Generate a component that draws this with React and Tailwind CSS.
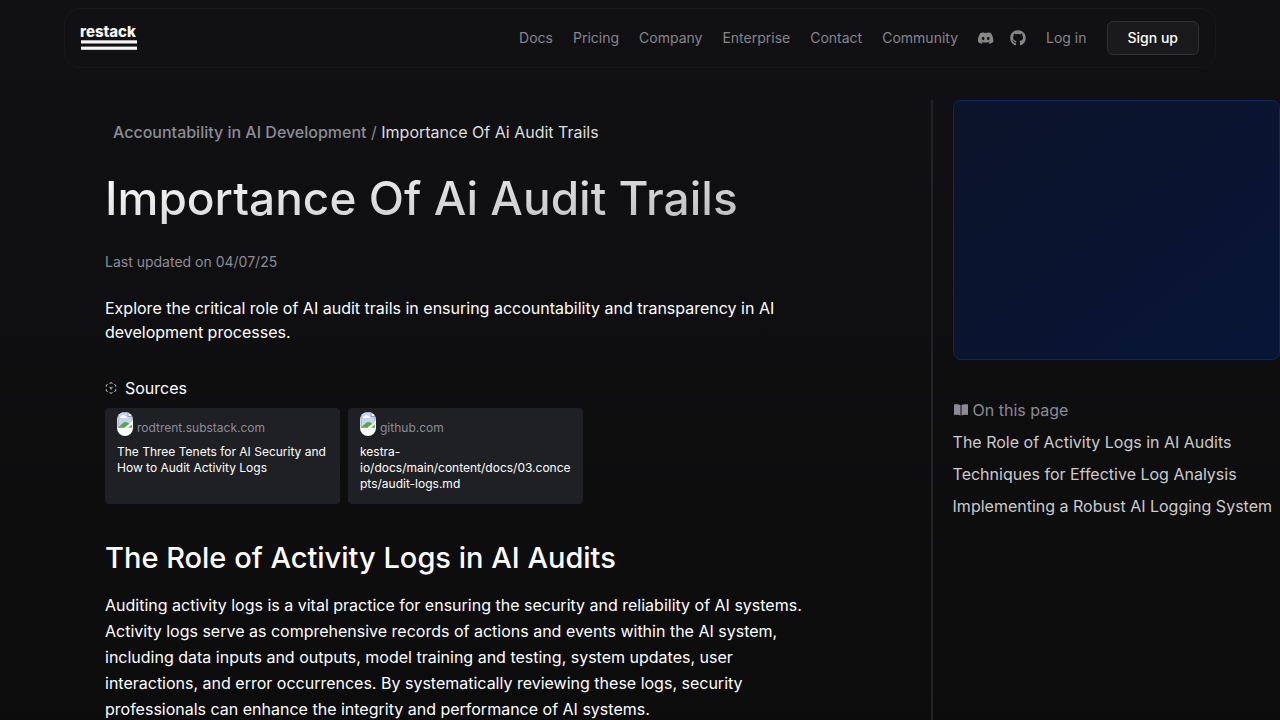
import { useId } from 'react';
import { FaGithub } from 'react-icons/fa';

const navLinks = ['Docs', 'Pricing', 'Company', 'Enterprise', 'Contact', 'Community'];

const sources = [
  {
    domain: 'rodtrent.substack.com',
    title: 'The Three Tenets for AI Security and How to Audit Activity Logs',
  },
  {
    domain: 'github.com',
    title: 'kestra-io/docs/main/content/docs/03.concepts/audit-logs.md',
  },
];

const sections = [
  'The Role of Activity Logs in AI Audits',
  'Techniques for Effective Log Analysis',
  'Implementing a Robust AI Logging System',
];

function Logo() {
  return (
    <a href="#" aria-label="restack home" className="block w-14 text-[#f5f5f5]">
      <svg viewBox="0 0 56 26" className="h-[26px] w-14 overflow-visible" fill="currentColor">
        <text x="-1" y="12" fontFamily="Inter" fontSize="15" fontWeight="800">restack</text>
        <rect x="0" y="15.300" width="56" height="3.200" />
        <rect x="0" y="21.600" width="56" height="3.200" />
      </svg>
    </a>
  );
}

function DiscordIcon() {
  return (
    <svg viewBox="0 0 25 24" className="h-4 w-4" fill="currentColor" aria-hidden="true">
      <path d="M20.317 4.37a19.8 19.8 0 0 0-4.885-1.515.07.07 0 0 0-.079.037c-.21.375-.444.864-.608 1.25a18.3 18.3 0 0 0-5.487 0 12.6 12.6 0 0 0-.617-1.25.08.08 0 0 0-.079-.037A19.7 19.7 0 0 0 3.677 4.37C.533 9.046-.32 13.58.099 18.057a.08.08 0 0 0 .031.057 19.9 19.9 0 0 0 5.993 3.03.08.08 0 0 0 .084-.028c.462-.63.874-1.295 1.226-1.994a.076.076 0 0 0-.041-.106 13 13 0 0 1-1.872-.892.077.077 0 0 1-.008-.128q.19-.14.372-.292a.07.07 0 0 1 .077-.01c3.928 1.793 8.18 1.793 12.062 0a.07.07 0 0 1 .078.01q.18.15.373.292a.077.077 0 0 1-.006.127 12.3 12.3 0 0 1-1.873.892.077.077 0 0 0-.041.107c.36.698.772 1.362 1.225 1.993a.08.08 0 0 0 .084.028 19.8 19.8 0 0 0 6.002-3.03.08.08 0 0 0 .032-.054c.5-5.177-.838-9.674-3.549-13.66a.06.06 0 0 0-.031-.03zM8.02 15.33c-1.183 0-2.157-1.085-2.157-2.419s.955-2.419 2.157-2.419c1.21 0 2.176 1.096 2.157 2.42 0 1.333-.956 2.418-2.157 2.418zm7.975 0c-1.183 0-2.157-1.085-2.157-2.419s.955-2.419 2.157-2.419c1.21 0 2.176 1.096 2.157 2.42 0 1.333-.946 2.418-2.157 2.418z" />
    </svg>
  );
}

function BookIcon() {
  return (
    <svg viewBox="0 0 16 16" className="h-4 w-4" fill="currentColor" aria-hidden="true">
      <path d="M7.5 3C6 2.200 3.500 2 1.500 2.300L1 2.800v10.200c2.400-.5 5-.3 6.500.4zM8.500 3c1.500-.8 4-1 6-.7l.5.5v10.200c-2.400-.5-5-.3-6.500.4z" />
    </svg>
  );
}

function SourcesIcon() {
  return (
    <svg viewBox="0 0 12 12" className="h-3 w-3" fill="none" stroke="currentColor" strokeWidth=".8" aria-hidden="true">
      <path d="M4.500 1.400 6 .7l1.500.7M9.300 2.400l1.400.8v1.500M10.700 7.300v1.500l-1.400.8M7.500 10.600l-1.500.7-1.500-.7M2.700 9.600l-1.400-.8V7.300M1.300 4.700V3.200l1.400-.8M4.500 5.300l1.500.8 1.500-.8M6 6.100v1.500" />
    </svg>
  );
}

// broken image placeholder, clipped to a pill
function Favicon() {
  const clipId = useId();

  return (
    <svg viewBox="0 0 16 24" className="h-6 w-4 shrink-0" aria-hidden="true">
      <clipPath id={clipId}>
        <rect width="16" height="24" rx="8" />
      </clipPath>
      <g clipPath={`url(#${clipId})`}>
        <rect width="16" height="24" fill="#fff" />
        <path d="M1 1h10l4 4v11H1z" fill="#c5d5f6" />
        <path d="M3 6q0-2 2-2 1-2 3 0 2 0 2 2z" fill="#fff" />
        <path d="M1 15.500 6.500 10.500q2-1 4 0l2 1.500-4.500 3.500z" fill="#55ab3c" />
        <path d="M7 16l8.500-6.500v3L11 16z" fill="#fff" />
        <path d="M11.500 15.500l3.500-3v3z" fill="#55ab3c" />
        <path d="M11 .5v4h4" fill="#f2f2f2" stroke="#8f8f8f" strokeWidth=".8" />
        <path d="M11 .5H1v15h7M15 4.500V9" fill="none" stroke="#9a9a9a" strokeWidth=".8" />
      </g>
    </svg>
  );
}

function Header() {
  return (
    <header className="px-16 pt-2">
      <nav className="flex h-[60px] items-center justify-between rounded-2xl border border-[#18181a] px-4">
        <Logo />
        <div className="flex items-center gap-5 text-sm text-[#86858d]">
          {navLinks.map((link) => (
            <a key={link} href="#">{link}</a>
          ))}
          <div className="flex items-center gap-4 text-[#868686]">
            <a href="#" aria-label="Discord"><DiscordIcon /></a>
            <a href="#" aria-label="GitHub"><FaGithub className="h-4 w-4" /></a>
          </div>
          <a href="#">Log in</a>
          <button type="button" className="h-[34px] rounded-md border border-[#313133] bg-[#1a1a1c] px-5 font-medium text-white">
            Sign up
          </button>
        </div>
      </nav>
    </header>
  );
}

function SourceCard({ source }) {
  return (
    <a href="#" className="flex h-24 w-[235px] flex-col rounded bg-[#1f2023] px-3 pt-1 text-xs">
      <span className="flex items-end gap-1 text-[#8b8c97]">
        <Favicon />
        {source.domain}
      </span>
      <span className="mt-2 break-words text-white">{source.title}</span>
    </a>
  );
}

function Article() {
  return (
    <article className="min-w-0 flex-1 pt-5 pl-[105px] text-white">
      <div className="max-w-[720px]">
        <div className="px-2 text-[#8b8c97]">
          <a href="#" className="font-medium">Accountability in AI Development</a> /{' '}
          <span className="text-[#dededf]">Importance Of Ai Audit Trails</span>
        </div>
        <h1 className="mt-6 w-fit bg-gradient-to-br from-white to-[#b5b5ba] bg-clip-text pb-2 text-[46px] leading-[60px] font-medium text-transparent">
          Importance Of Ai Audit Trails
        </h1>
        <p className="mt-4 text-sm text-[#8b8c97]">Last updated on 04/07/25</p>
        <p className="mt-6">
          Explore the critical role of AI audit trails in ensuring accountability and transparency in AI development
          processes.
        </p>
        <div className="mt-8 flex items-center gap-2">
          <SourcesIcon />
          <span>Sources</span>
        </div>
        <div className="mt-2 flex gap-2">
          {sources.map((source) => (
            <SourceCard key={source.domain} source={source} />
          ))}
        </div>
        <h2 className="mt-9 text-[29px] leading-9 font-medium">The Role of Activity Logs in AI Audits</h2>
        <p className="mt-4 leading-relaxed">
          Auditing activity logs is a vital practice for ensuring the security and reliability of AI systems. Activity
          logs serve as comprehensive records of actions and events within the AI system, including data inputs and
          outputs, model training and testing, system updates, user interactions, and error occurrences. By
          systematically reviewing these logs, security professionals can enhance the integrity and performance of AI
          systems.
        </p>
      </div>
    </article>
  );
}

function Sidebar() {
  return (
    <aside className="shrink-0 border-l-2 border-[#242427] pl-5">
      <div className="h-[260px] rounded-lg border border-[#0f2663] bg-gradient-to-br from-[#0c142a] to-[#081537]" />
      <div className="mt-[38px] flex items-center gap-1 text-[#8b8a94]">
        <BookIcon />
        <span>On this page</span>
      </div>
      <ul className="mt-2 flex flex-col gap-2 pr-2 text-[#cbcbcc]">
        {sections.map((section) => (
          <li key={section}>
            <a href="#">{section}</a>
          </li>
        ))}
      </ul>
    </aside>
  );
}

export default function App() {
  return (
    <div className="flex min-h-screen flex-col bg-gradient-to-b from-[#111113] to-[#0c0c0d] font-['Inter',sans-serif] text-base">
      <Header />
      <main className="mt-8 flex flex-1">
        <Article />
        <Sidebar />
      </main>
    </div>
  );
}
